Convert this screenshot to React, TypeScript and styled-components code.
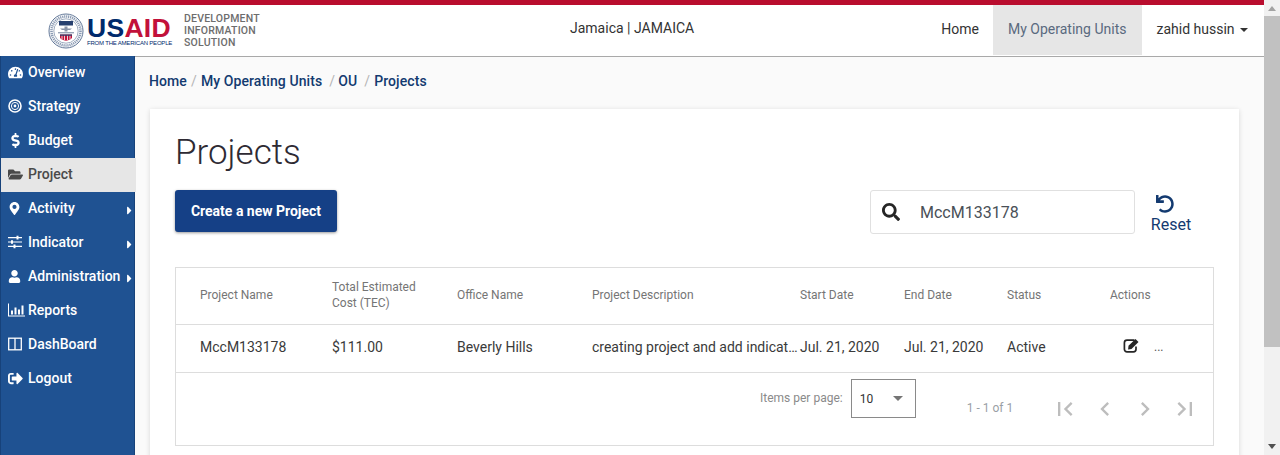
import React from 'react';
import styled, { createGlobalStyle } from 'styled-components';
import {
	FaTachometerAlt, FaDollarSign, FaFolderOpen, FaMapMarkerAlt,
	FaUser, FaSignOutAlt, FaSearch, FaUndo, FaCaretRight,
} from 'react-icons/fa';
import { MdFirstPage, MdLastPage, MdChevronLeft, MdChevronRight } from 'react-icons/md';

const BullseyeIcon = () => (
	<svg width="14" height="14" viewBox="0 0 14 14" fill="none" stroke="currentColor">
		<circle cx="7" cy="7" r="6" strokeWidth="1.6" />
		<circle cx="7" cy="7" r="3.6" strokeWidth="1" />
		<circle cx="7" cy="7" r="1.4" fill="currentColor" stroke="none" />
	</svg>
);

const SlidersIcon = () => (
	<svg width="14" height="14" viewBox="0 0 14 14" fill="currentColor">
		<path d="M0 2h14v1.200H0zM0 6.400h14v1.200H0zM0 10.800h14V12H0z" />
		<path d="M8.500 .8h2v3.600h-2zM3 5.200h2v3.600H3zM5.500 9.600h2v3.600h-2z" />
	</svg>
);

const ChartIcon = () => (
	<svg width="17" height="14" viewBox="0 0 17 14" fill="currentColor">
		<path d="M0 .5h1V12.500h16v1H0z" />
		<path d="M3 7.500h2V11.500H3zM6.500 4.500h2v7h-2zM10 6.500h2v5h-2zM13.500 2.500h2v9h-2z" />
	</svg>
);

const ColumnsIcon = () => (
	<svg width="14" height="14" viewBox="0 0 14 14" fill="none" stroke="currentColor" strokeWidth="1.300">
		<rect x=".7" y="1.200" width="12.600" height="11.600" />
		<path d="M7 1.200v11.600" />
	</svg>
);

const EditIcon = () => (
	<svg width="17" height="15" viewBox="0 0 17 15">
		<path d="M11.500 2.200H4a2.600 2.600 0 0 0-2.600 2.600v6.400A2.600 2.600 0 0 0 4 13.800h6.400a2.600 2.600 0 0 0 2.600-2.600V8.500" fill="none" stroke="currentColor" strokeWidth="1.700" />
		<path d="M5.500 7.800 12.500 1l3 3-7 6.900-3.400.5z" fill="currentColor" />
	</svg>
);

const menu = [
	{ name: 'Overview', icon: <FaTachometerAlt /> },
	{ name: 'Strategy', icon: <BullseyeIcon /> },
	{ name: 'Budget', icon: <FaDollarSign /> },
	{ name: 'Project', icon: <FaFolderOpen />, active: true },
	{ name: 'Activity', icon: <FaMapMarkerAlt size={13} />, sub: true },
	{ name: 'Indicator', icon: <SlidersIcon />, sub: true },
	{ name: 'Administration', icon: <FaUser size={13} />, sub: true },
	{ name: 'Reports', icon: <ChartIcon /> },
	{ name: 'DashBoard', icon: <ColumnsIcon /> },
	{ name: 'Logout', icon: <FaSignOutAlt /> },
];

const columns = ['Project Name', 'Total Estimated Cost (TEC)', 'Office Name', 'Project Description', 'Start Date', 'End Date', 'Status', 'Actions'];

const App = () => (
	<>
		<GlobalStyle />
		<Page>
			<Main>
				<Header>
					<Brand>
						<Seal />
						<Wordmark>
							<WordmarkTitle>US<span>AID</span></WordmarkTitle>
							<WordmarkSub>FROM THE AMERICAN PEOPLE</WordmarkSub>
						</Wordmark>
						<BrandName>DEVELOPMENT<br />INFORMATION<br />SOLUTION</BrandName>
					</Brand>
					<Country>Jamaica | JAMAICA</Country>
					<Nav>
						<NavLink>Home</NavLink>
						<NavLink $active>My Operating Units</NavLink>
						<UserLink>zahid hussin <Caret /></UserLink>
					</Nav>
				</Header>
				<Body>
					<Sidebar>
						{menu.map(({ name, icon, active, sub }) => (
							<MenuItem key={name} $active={active}>
								<MenuIcon>{icon}</MenuIcon>
								{name}
								{sub && <SubArrow><FaCaretRight /></SubArrow>}
							</MenuItem>
						))}
					</Sidebar>
					<Content>
						<Breadcrumb>
							<span>Home</span><Sep $left={4} $right={4}>/</Sep>
							<span>My Operating Units</span><Sep $left={7} $right={3}>/</Sep>
							<span>OU</span><Sep $left={7} $right={4}>/</Sep>
							<span>Projects</span>
						</Breadcrumb>
						<Card>
							<Title>Projects</Title>
							<Toolbar>
								<CreateButton>Create a new Project</CreateButton>
								<Search>
									<FaSearch />
									<SearchText>MccM133178</SearchText>
								</Search>
								<Reset><FaUndo /><span>Reset</span></Reset>
							</Toolbar>
							<Table>
								<HeadRow>
									{columns.map(c => <HeadCell key={c}>{c}</HeadCell>)}
								</HeadRow>
								<DataRow>
									<Cell>MccM133178</Cell>
									<Cell>$111.00</Cell>
									<Cell>Beverly Hills</Cell>
									<Cell>creating project and add indicat…</Cell>
									<Cell>Jul. 21, 2020</Cell>
									<Cell>Jul. 21, 2020</Cell>
									<Cell>Active</Cell>
									<Actions><EditIcon /><More>...</More></Actions>
								</DataRow>
								<Paginator>
									<PerPage>Items per page:</PerPage>
									<PageSelect>10<SelectArrow /></PageSelect>
									<Range>1 - 1 of 1</Range>
									<PageButtons>
										<MdFirstPage />
										<MdChevronLeft />
										<MdChevronRight />
										<MdLastPage />
									</PageButtons>
								</Paginator>
							</Table>
						</Card>
					</Content>
				</Body>
			</Main>
			<Scrollbar>
				<ScrollUp />
				<ScrollThumb />
				<ScrollDown />
			</Scrollbar>
		</Page>
	</>
);

export default App;

const Seal = () => (
	<SealSvg viewBox="0 0 36 36">
		<circle cx="18" cy="18" r="17" fill="#fff" stroke="#5f7596" strokeWidth="1" />
		<circle cx="18" cy="18" r="14.500" fill="none" stroke="#8a9ab3" strokeWidth="2.600" strokeDasharray="1.200 .8" />
		<circle cx="18" cy="18" r="12.200" fill="#fff" stroke="#5f7596" strokeWidth=".6" />
		<rect x="11" y="8" width="14" height="4.500" fill="#27406f" />
		<path d="M12 15.500h12l-2 1.600h-8zM16.500 13.500h3v5h-3z" fill="#8a94a8" />
		<path d="M10 19h16v1.400H10z" fill="#9aa5b8" />
		<path d="M12 21.500h12v3c0 1.600-3 2.600-6 3.200-3-.6-6-1.600-6-3.200z" fill="#c2113a" />
		<path d="M12 21.500h12v1.300H12z" fill="#27406f" />
		<path d="M14 22.800v3.500M16.500 22.800v4.200M19.500 22.800v4.200M22 22.800v3.500" stroke="#fff" strokeWidth=".8" />
	</SealSvg>
);

const GlobalStyle = createGlobalStyle`
	html, body {
		margin: 0;
		padding: 0;
		overflow: hidden;
	}
	body {
		font-family: Roboto, "Liberation Sans", sans-serif;
		font-size: 14px;
		color: #333;
	}
	* {
		box-sizing: border-box;
	}
`;

const Page = styled.div`
	display: flex;
	width: 1280px;
	height: 455px;
	overflow: hidden;
`;

const Main = styled.div`
	flex: 1;
	display: flex;
	flex-direction: column;
	min-width: 0;
`;

const Header = styled.header`
	display: flex;
	height: 56px;
	flex: none;
	background: #fff;
	border-top: 5px solid #b90d2e;
`;

const Brand = styled.div`
	display: flex;
	align-items: center;
	width: 570px;
	padding-left: 48px;
`;

const SealSvg = styled.svg`
	width: 36px;
	height: 36px;
	flex: none;
	margin-top: 1px;
`;

const Wordmark = styled.div`
	display: flex;
	flex-direction: column;
	width: 84px;
	margin-left: 3px;
	margin-top: 3px;
	font-family: "Liberation Sans", Arial, sans-serif;
`;

const WordmarkTitle = styled.div`
	font-size: 26.5px;
	line-height: 23px;
	font-weight: 700;
	letter-spacing: 0.3px;
	color: #002a6c;
	span {
		color: #c2113a;
	}
`;

const WordmarkSub = styled.div`
	font-size: 6px;
	line-height: 7px;
	color: #002a6c;
	white-space: nowrap;
	letter-spacing: -0.2px;
`;

const BrandName = styled.div`
	margin-left: 13px;
	font-size: 10.5px;
	line-height: 12px;
	font-weight: 500;
	color: #6d6d6d;
	letter-spacing: 0.2px;
`;

const Country = styled.div`
	flex: 1;
	padding-top: 15px;
	font-size: 14px;
	line-height: 16px;
	color: #333;
`;

const Nav = styled.nav`
	display: flex;
	height: 50px;
	margin-right: 1px;
`;

const NavLink = styled.a<{ $active?: boolean }>`
	display: flex;
	align-items: center;
	height: 100%;
	padding: 0 ${p => (p.$active ? '16px' : '14px')} 2px 15px;
	font-size: 14px;
	color: ${p => (p.$active ? '#5a6a7f' : '#333')};
	background: ${p => (p.$active ? '#e6e6e6' : 'transparent')};
	white-space: pre;
`;

const UserLink = styled(NavLink)`
	padding: 0 15px 2px 14px;
`;

const Caret = styled.span`
	display: inline-block;
	margin-left: 2px;
	margin-top: 2px;
	border-top: 4px solid #333;
	border-left: 4px solid transparent;
	border-right: 4px solid transparent;
`;

const Body = styled.div`
	flex: 1;
	display: flex;
	min-height: 0;
`;

const Sidebar = styled.aside`
	flex: none;
	width: 135px;
	background: #1f5292;
	border-left: 1px solid #17427a;
	border-right: 1px solid #17427a;
`;

const MenuItem = styled.a<{ $active?: boolean }>`
	position: relative;
	display: flex;
	align-items: center;
	height: 34px;
	padding: 0 0 2px 7px;
	font-size: 14px;
	font-weight: 500;
	color: ${p => (p.$active ? '#4a4a4a' : '#fff')};
	background: ${p => (p.$active ? '#e6e6e6' : 'transparent')};
	margin-right: ${p => (p.$active ? '-2px' : '0')};
	white-space: nowrap;
`;

const MenuIcon = styled.span`
	display: flex;
	justify-content: flex-start;
	width: 20px;
	font-size: 15px;
	svg {
		display: block;
	}
`;

const SubArrow = styled.span`
	position: absolute;
	left: 122px;
	top: 12px;
	font-size: 13px;
	line-height: 0;
	svg {
		display: block;
	}
`;

const Content = styled.main`
	flex: 1;
	min-width: 0;
	background: #fafafa;
	border-top: 1px solid #a9a9a9;
	padding: 0 25px 0 14px;
`;

const Breadcrumb = styled.div`
	display: flex;
	align-items: center;
	height: 52px;
	padding-bottom: 4px;
	font-size: 14px;
	font-weight: 500;
	letter-spacing: 0.1px;
	color: #133a70;
`;

const Sep = styled.span<{ $left: number; $right: number }>`
	padding: 0 ${p => p.$right}px 0 ${p => p.$left}px;
	font-weight: 400;
	color: #b5b5b5;
`;

const Card = styled.section`
	background: #fff;
	margin-left: 1px;
	padding: 20px 25px 0;
	height: 400px;
	box-shadow: 0 1px 5px rgba(0, 0, 0, 0.14);
`;

const Title = styled.h1`
	margin: 0;
	height: 61px;
	padding-top: 2px;
	font-size: 35px;
	line-height: 44px;
	font-weight: 300;
	color: #2e2a33;
`;

const Toolbar = styled.div`
	display: flex;
	align-items: flex-start;
	height: 77px;
`;

const CreateButton = styled.button`
	width: 162px;
	height: 42px;
	padding: 0;
	border: 0;
	border-radius: 3px;
	background: #154086;
	box-shadow: 0 1px 3px rgba(0, 0, 0, 0.4);
	font-family: inherit;
	font-size: 14px;
	font-weight: 700;
	color: #fff;
`;

const Search = styled.div`
	display: flex;
	align-items: center;
	width: 265px;
	height: 44px;
	margin-left: auto;
	padding: 0 11px;
	border: 1px solid #e0e0e0;
	border-radius: 3px;
	font-size: 18px;
	color: #262626;
`;

const SearchText = styled.span`
	margin-left: 20px;
	font-size: 16px;
	color: #495057;
`;

const Reset = styled.div`
	display: flex;
	flex-direction: column;
	align-items: center;
	width: 42px;
	margin-left: 15px;
	margin-right: 22px;
	padding-top: 5px;
	font-size: 16px;
	line-height: 20px;
	color: #133a70;
	svg {
		font-size: 18px;
		margin-bottom: 2px;
		margin-left: -13px;
	}
`;

const Table = styled.div`
	border: 1px solid #ddd;
	height: 179px;
`;

const rowGrid = `
	display: grid;
	grid-template-columns: 132px 125px 135px 208px 104px 103px 103px 1fr;
	padding-left: 24px;
	align-items: center;
`;

const HeadRow = styled.div`
	${rowGrid}
	height: 57px;
	padding-bottom: 2px;
	border-bottom: 1px solid #ddd;
`;

const HeadCell = styled.div`
	font-size: 12px;
	line-height: 16px;
	color: #757575;
	padding-right: 30px;
	&:nth-child(1), &:nth-child(4) {
		padding-right: 0;
		white-space: nowrap;
	}
`;

const DataRow = styled.div`
	${rowGrid}
	height: 48px;
	padding-bottom: 4px;
	border-bottom: 1px solid #ddd;
`;

const Cell = styled.div`
	font-size: 14px;
	color: #3a3a3a;
	white-space: nowrap;
`;

const Actions = styled.div`
	display: flex;
	align-items: center;
	padding-left: 13px;
	color: #262626;
	svg {
		margin-top: -3px;
	}
`;

const More = styled.span`
	margin-left: 14px;
	font-size: 12px;
	color: #555;
`;

const Paginator = styled.div`
	display: flex;
	align-items: flex-start;
	padding: 6px 0 0 584px;
	font-size: 12px;
	color: #8a8a8a;
`;

const PerPage = styled.span`
	margin-top: 12px;
	line-height: 14px;
`;

const PageSelect = styled.div`
	display: flex;
	align-items: center;
	justify-content: space-between;
	width: 65px;
	height: 39px;
	margin-left: 8px;
	padding: 0 12px 0 8px;
	border: 1px solid #8a8a8a;
	font-size: 12px;
	color: #333;
`;

const SelectArrow = styled.span`
	border-top: 5px solid #757575;
	border-left: 5px solid transparent;
	border-right: 5px solid transparent;
`;

const Range = styled.span`
	margin: 22px 0 0 51px;
	line-height: 14px;
	color: #9aa0a6;
`;

const PageButtons = styled.div`
	display: flex;
	gap: 12px;
	margin: 16px 0 0 38px;
	font-size: 28px;
	color: #bdbdbd;
	svg {
		display: block;
	}
`;

const Scrollbar = styled.div`
	flex: none;
	display: flex;
	flex-direction: column;
	align-items: center;
	width: 16px;
	background: #f1f1f1;
`;

const ScrollUp = styled.div`
	margin: 6px 0 5px;
	border-bottom: 5px solid #a3a3a3;
	border-left: 4px solid transparent;
	border-right: 4px solid transparent;
`;

const ScrollThumb = styled.div`
	width: 100%;
	height: 331px;
	background: #c1c1c1;
`;

const ScrollDown = styled.div`
	margin-top: auto;
	margin-bottom: 6px;
	border-top: 5px solid #505050;
	border-left: 4px solid transparent;
	border-right: 4px solid transparent;
`;
